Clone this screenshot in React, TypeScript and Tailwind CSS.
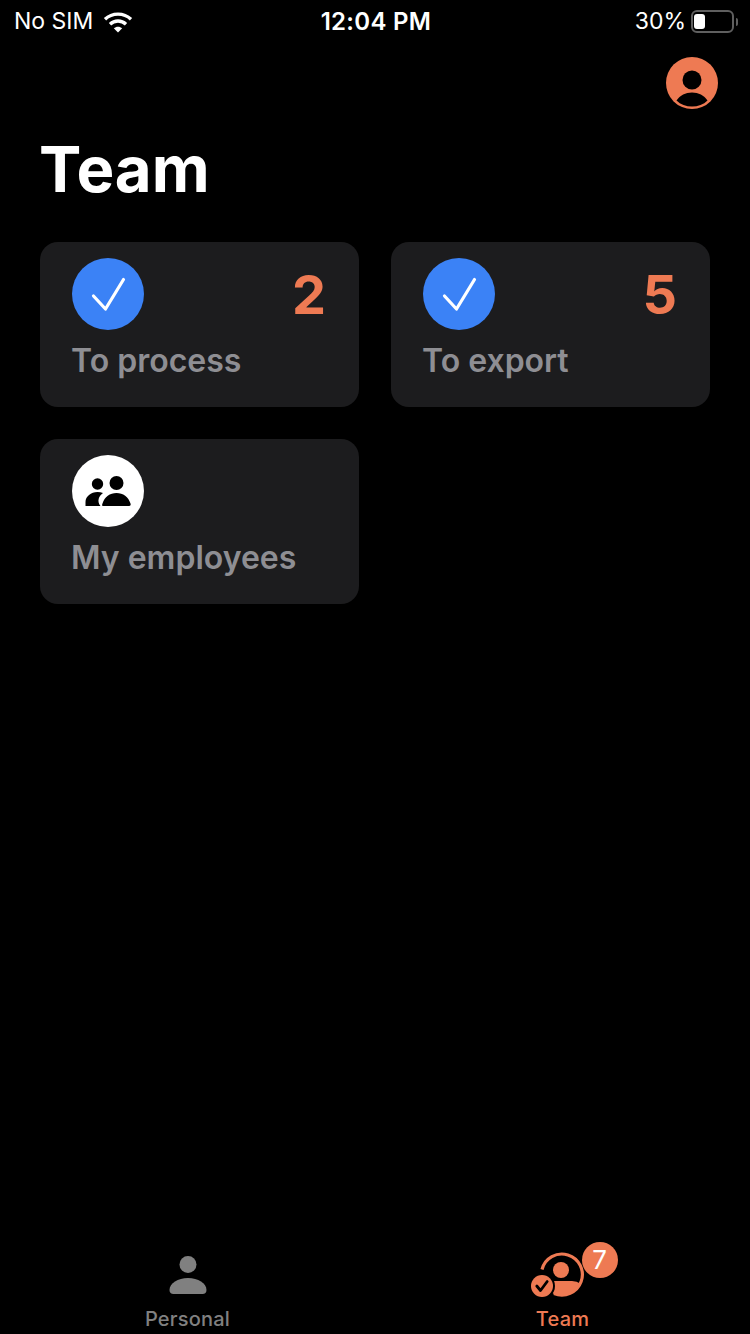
const orange = "#ee7a53";

function Wifi() {
  return (
    <svg width="30" height="22" viewBox="0 0 30 22" fill="none" stroke="#fff" className="ml-[10px]">
      <path d="M2 8.200C9.200 1.400 20.800 1.400 28 8.200" strokeWidth="3.400" />
      <path d="M7 13.200C11.600 9 18.400 9 23 13.200" strokeWidth="3.400" />
      <path d="M15 21.500 10.800 17.300C13.200 15.200 16.800 15.200 19.200 17.300Z" fill="#fff" stroke="none" />
    </svg>
  );
}

function Battery() {
  return (
    <div className="ml-[5px] flex items-center">
      <div className="flex h-[23px] w-[43px] items-center rounded-[6px] border-2 border-[#5f5f5f] pl-[1.5px]">
        <div className="h-[15px] w-[11px] rounded-[3px] bg-white" />
      </div>
      <div className="ml-[2px] h-[8px] w-[2px] rounded-r-sm bg-[#5f5f5f]" />
    </div>
  );
}

function StatusBar() {
  return (
    <div className="grid h-[42px] shrink-0 grid-cols-3 items-center pl-[14px] pr-[12px] pt-[1px] text-[23px] text-white">
      <div className="flex items-center">
        <span>No SIM</span>
        <Wifi />
      </div>
      <div className="whitespace-nowrap text-center text-[24px] font-semibold tracking-[0.3px]">12:04 PM</div>
      <div className="flex items-center justify-end">
        <span>30%</span>
        <Battery />
      </div>
    </div>
  );
}

function Avatar() {
  return (
    <svg width="52" height="52" viewBox="0 0 52 52">
      <circle cx="26" cy="26" r="26" fill={orange} />
      <circle cx="26" cy="23" r="9.500" fill="#000" />
      <path d="M10.500 43.500C14 38.200 19.500 35.500 26 35.500S38 38.200 41.500 43.500C37.500 47.500 32 49.500 26 49.500S14.500 47.500 10.500 43.500Z" fill="#000" />
    </svg>
  );
}

function CheckBadge() {
  return (
    <div className="flex h-[72px] w-[72px] items-center justify-center rounded-full bg-[#3b82f6]">
      <svg width="36" height="36" viewBox="0 0 36 36" fill="none" stroke="#fff" strokeWidth="3.200" strokeLinecap="round" strokeLinejoin="round">
        <path d="M3.500 20 15.500 33 33.500 3.500" />
      </svg>
    </div>
  );
}

function PeopleBadge() {
  return (
    <div className="flex h-[72px] w-[72px] items-center justify-center rounded-full bg-white">
      <svg width="46" height="30" viewBox="0 0 46 30" fill="#000">
        <circle cx="12.500" cy="8" r="5.700" />
        <circle cx="31.500" cy="7" r="7" />
        <path d="M0.500 30V26C0.500 20.500 6 16 12.500 16C14.500 16 16.300 16.300 18 17C14 20 11.500 25 15.500 30Z" />
        <path d="M17.500 30C17 29.500 17 28.500 17.500 27.500C19.500 21 25 17 31.500 17C38 17 43.500 21 45.500 27.500C46 29 45.500 30 44 30Z" />
      </svg>
    </div>
  );
}

function Card({ icon, label, count }: { icon: React.ReactNode; label: string; count?: number }) {
  return (
    <div className="h-[165px] rounded-[18px] bg-[#1c1c1e] px-[33px] pt-[16px]">
      <div className="ml-[-1px] flex items-center justify-between">
        {icon}
        {count !== undefined && <span className="translate-y-[0.5px] text-[54px] font-bold leading-none text-[#ee7a53]">{count}</span>}
      </div>
      <div className="ml-[-2px] mt-[9px] whitespace-nowrap text-[32px] font-semibold leading-[44px] text-[#8e8e93]">{label}</div>
    </div>
  );
}

function PersonalIcon() {
  return (
    <svg width="38" height="38" viewBox="0 0 38 38" fill="#808080">
      <circle cx="19" cy="8.500" r="8.500" />
      <path d="M0.500 34C0.500 27 9 22 19 22S37.500 27 37.500 34C37.500 36.500 36 38 33.500 38H4.500C2 38 0.500 36.500 0.500 34Z" />
    </svg>
  );
}

function TeamIcon() {
  return (
    <svg width="56" height="48" viewBox="0 0 56 48" fill="none">
      <defs>
        <clipPath id="team-clip">
          <circle cx="32" cy="24.500" r="21" />
        </clipPath>
      </defs>
      <path d="M12 19.500A20.500 20.500 0 1 1 24 43.500" stroke={orange} strokeWidth="3.200" />
      <circle cx="31" cy="20" r="8" fill={orange} />
      <rect x="10" y="31" width="44" height="18" rx="12" fill={orange} clipPath="url(#team-clip)" />
      <circle cx="12" cy="36" r="13" fill="#000" />
      <circle cx="12" cy="36" r="11" fill={orange} />
      <path d="M6.800 36 10.500 40.500 17.200 31.500" stroke="#000" strokeWidth="2.800" strokeLinecap="round" strokeLinejoin="round" />
    </svg>
  );
}

function TabBar() {
  return (
    <div className="grid h-[94px] shrink-0 grid-cols-2">
      <div className="flex flex-col items-center pt-[16px]">
        <PersonalIcon />
        <span className="mt-[13px] text-[20px] font-medium leading-[24px] tracking-[0.2px] text-[#808080]">Personal</span>
      </div>
      <div className="flex flex-col items-center pt-[10px]">
        <div className="relative h-[48px] w-[66px]">
          <TeamIcon />
          <div className="absolute left-[52px] top-[-8px] flex h-[36px] w-[36px] items-center justify-center rounded-full bg-[#ee7a53] text-[26px] leading-none text-white">
            7
          </div>
        </div>
        <span className="mt-[9px] text-[20px] font-medium leading-[24px] tracking-[0.2px] text-[#ee7a53]">Team</span>
      </div>
    </div>
  );
}

export default function App() {
  return (
    <div className="flex h-[1334px] w-[750px] flex-col overflow-hidden bg-black" style={{ fontFamily: "Inter, sans-serif" }}>
      <StatusBar />
      <div className="flex-1 px-[40px]">
        <div className="flex justify-end">
          <div className="mr-[-8px] mt-[15px]">
            <Avatar />
          </div>
        </div>
        <h1 className="ml-[-1px] mt-[20px] text-[63.5px] font-bold leading-[80px] text-white">Team</h1>
        <div className="mt-[33px] grid grid-cols-2 gap-[32px]">
          <Card icon={<CheckBadge />} label="To process" count={2} />
          <Card icon={<CheckBadge />} label="To export" count={5} />
          <Card icon={<PeopleBadge />} label="My employees" />
        </div>
      </div>
      <TabBar />
    </div>
  );
}
